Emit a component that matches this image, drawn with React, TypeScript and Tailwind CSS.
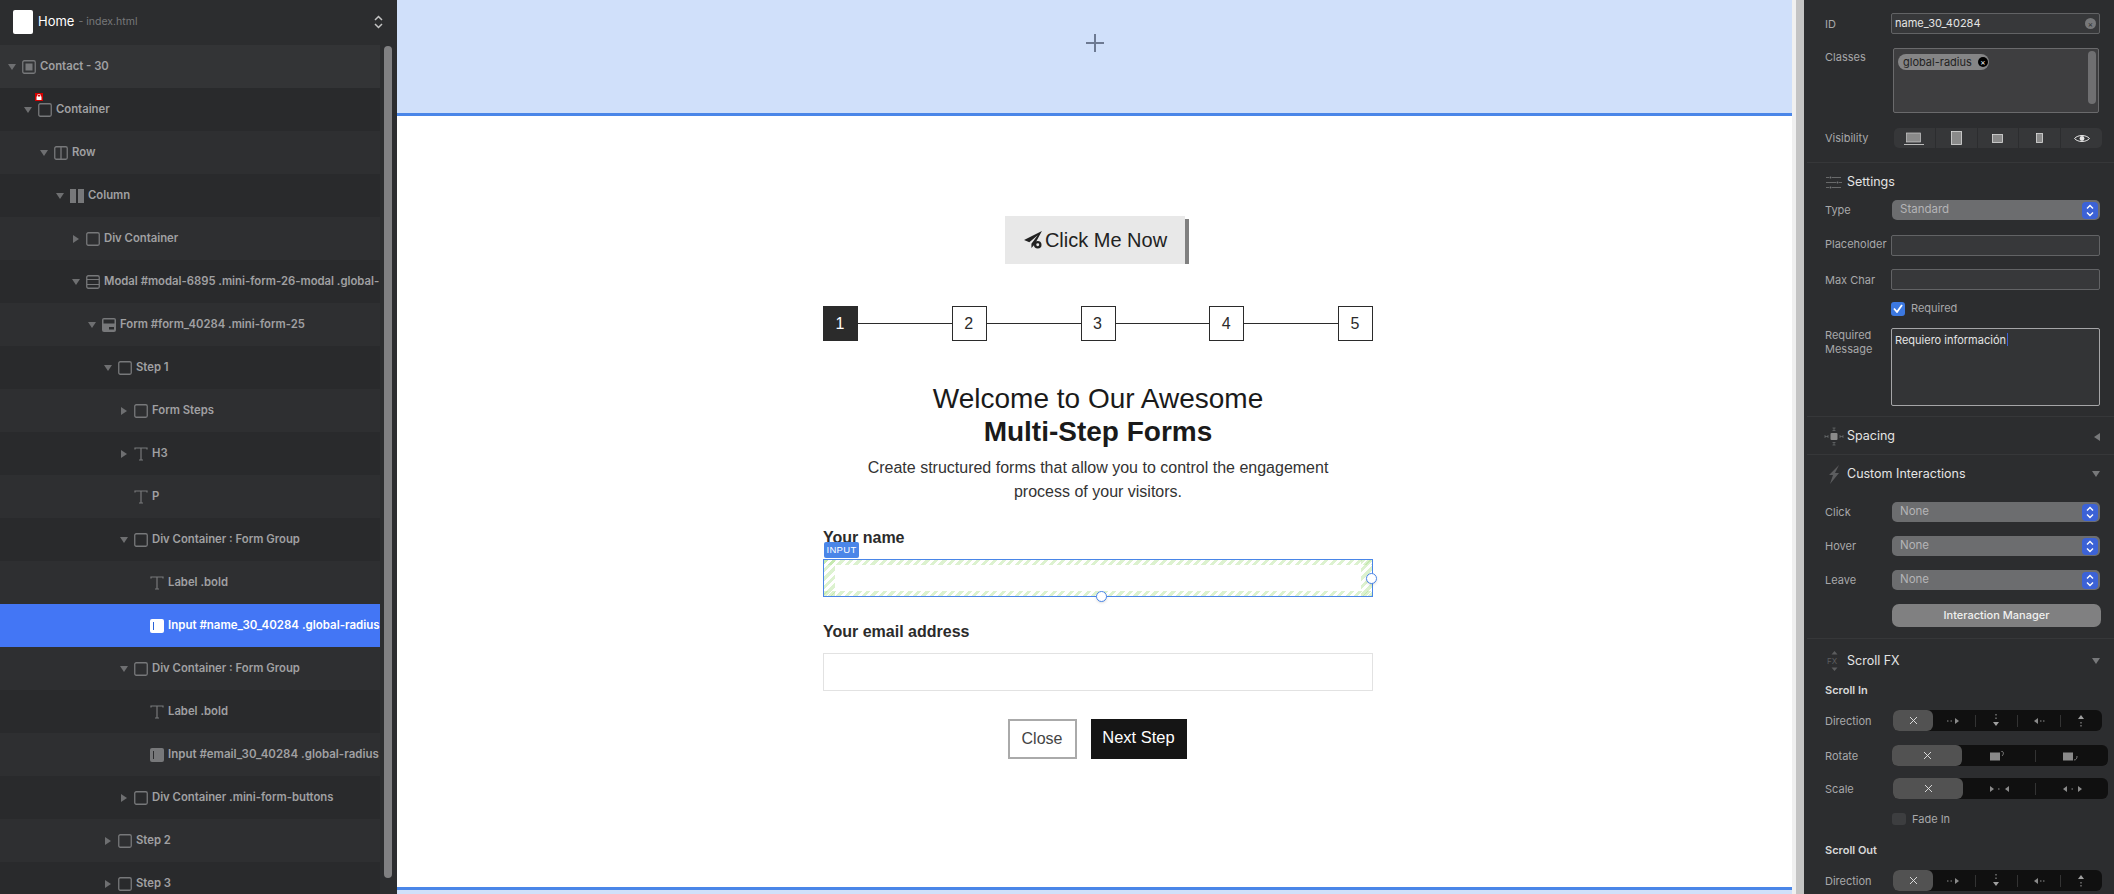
import { Fragment } from 'react';
import type { ReactNode } from 'react';

const hatch =
    'bg-[repeating-linear-gradient(135deg,rgba(150,215,110,0.33)_0px,rgba(150,215,110,0.33)_3px,transparent_3px,transparent_6px)]';

function Box() {
    return (
        <svg width="14" height="14" viewBox="0 0 14 14" fill="none">
            <rect x="0.75" y="0.75" width="12.5" height="12.5" rx="1.5" stroke="#77787a" strokeWidth="1.3" />
        </svg>
    );
}

function SectionIcon() {
    return (
        <svg width="14" height="14" viewBox="0 0 14 14" fill="none">
            <rect x="0.75" y="0.75" width="12.5" height="12.5" rx="1.5" stroke="#77787a" strokeWidth="1.3" />
            <rect x="3.5" y="3.5" width="7" height="7" fill="#77787a" />
        </svg>
    );
}

function RowIcon() {
    return (
        <svg width="14" height="14" viewBox="0 0 14 14" fill="none">
            <rect x="0.75" y="0.75" width="12.5" height="12.5" rx="1.5" stroke="#77787a" strokeWidth="1.3" />
            <path d="M7 1v12" stroke="#77787a" strokeWidth="1.3" />
        </svg>
    );
}

function ColumnIcon() {
    return (
        <svg width="14" height="14" viewBox="0 0 14 14">
            <rect x="0" y="0" width="6" height="14" fill="#77787a" />
            <rect x="8" y="0" width="6" height="14" fill="#77787a" />
        </svg>
    );
}

function ModalIcon() {
    return (
        <svg width="14" height="14" viewBox="0 0 14 14" fill="none">
            <rect x="0.75" y="0.75" width="12.5" height="12.5" rx="1.5" stroke="#77787a" strokeWidth="1.3" />
            <path d="M1 4.5h12M1 9.5h12" stroke="#77787a" strokeWidth="1.2" />
        </svg>
    );
}

function FormIcon() {
    return (
        <svg width="14" height="14" viewBox="0 0 14 14">
            <rect x="0" y="0" width="14" height="14" rx="2" fill="#77787a" />
            <rect x="1.5" y="1.5" width="11" height="4" fill="#2b2c2e" />
            <rect x="7" y="9" width="5" height="2.5" fill="#2b2c2e" />
        </svg>
    );
}

function TextIcon() {
    return (
        <svg width="14" height="14" viewBox="0 0 14 14" fill="none">
            <path d="M1 2.5V1h12v1.5M7 1v12M5 13h4" stroke="#77787a" strokeWidth="1.2" />
        </svg>
    );
}

function InputIcon({ active }: { active?: boolean }) {
    return (
        <svg width="14" height="14" viewBox="0 0 14 14">
            <rect x="0" y="0" width="14" height="14" rx="2" fill={active ? '#ffffff' : '#77787a'} />
            <path d="M3.5 3v8" stroke={active ? '#2a63d8' : '#2b2c2e'} strokeWidth="1" />
        </svg>
    );
}

type TreeRow = {
    depth: number;
    arrow?: 'down' | 'right';
    icon: ReactNode;
    label: string;
    lock?: boolean;
    active?: boolean;
    wide?: boolean;
};

const treeRows: TreeRow[] = [
    { depth: 0, arrow: 'down', icon: <SectionIcon />, label: 'Contact - 30' },
    { depth: 1, arrow: 'down', icon: <Box />, label: 'Container', lock: true },
    { depth: 2, arrow: 'down', icon: <RowIcon />, label: 'Row' },
    { depth: 3, arrow: 'down', icon: <ColumnIcon />, label: 'Column' },
    { depth: 4, arrow: 'right', icon: <Box />, label: 'Div Container' },
    { depth: 4, arrow: 'down', icon: <ModalIcon />, label: 'Modal #modal-6895 .mini-form-26-modal .global-' },
    { depth: 5, arrow: 'down', icon: <FormIcon />, label: 'Form #form_40284 .mini-form-25' },
    { depth: 6, arrow: 'down', icon: <Box />, label: 'Step 1' },
    { depth: 7, arrow: 'right', icon: <Box />, label: 'Form Steps' },
    { depth: 7, arrow: 'right', icon: <TextIcon />, label: 'H3' },
    { depth: 7, icon: <TextIcon />, label: 'P' },
    { depth: 7, arrow: 'down', icon: <Box />, label: 'Div Container : Form Group' },
    { depth: 8, icon: <TextIcon />, label: 'Label .bold' },
    { depth: 8, icon: <InputIcon active />, label: 'Input #name_30_40284 .global-radius', active: true, wide: true },
    { depth: 7, arrow: 'down', icon: <Box />, label: 'Div Container : Form Group' },
    { depth: 8, icon: <TextIcon />, label: 'Label .bold' },
    { depth: 8, icon: <InputIcon />, label: 'Input #email_30_40284 .global-radius', wide: true },
    { depth: 7, arrow: 'right', icon: <Box />, label: 'Div Container .mini-form-buttons' },
    { depth: 6, arrow: 'right', icon: <Box />, label: 'Step 2' },
    { depth: 6, arrow: 'right', icon: <Box />, label: 'Step 3' },
];

function Tree() {
    return (
        <aside className="relative flex h-full w-[397px] shrink-0 flex-col bg-[#2c2d2f] font-['Inter',sans-serif]">
            <div className="flex h-[44px] shrink-0 items-center pl-[13px] pr-[14px]">
                <div className="h-[24px] w-[20px] rounded-[2px] bg-white" />
                <span className="ml-[5px] text-[13px] text-white">Home</span>
                <span className="ml-[4px] text-[10.5px] text-[#77787a]">- index.html</span>
                <svg className="ml-auto" width="9" height="14" viewBox="0 0 9 14" fill="none">
                    <path d="M1 5l3.5-3.5L8 5M1 9l3.5 3.5L8 9" stroke="#c4c4c4" strokeWidth="1.5" />
                </svg>
            </div>
            <div className="mt-[1px] flex w-[380px] flex-col">
                {treeRows.map((row, i) => (
                    <div
                        key={i}
                        style={{ paddingLeft: 8 + row.depth * 16 }}
                        className={`relative flex h-[43px] shrink-0 items-center ${
                            row.active
                                ? 'bg-[#4376f5]'
                                : i === 0
                                  ? 'bg-[#333436]'
                                  : i % 2 === 0
                                    ? 'bg-[#2e2f31]'
                                    : 'bg-[#292a2c]'
                        }`}
                    >
                        <span className="flex w-[14px] shrink-0 justify-start">
                            {row.arrow === 'down' && (
                                <span className="h-0 w-0 border-x-[4px] border-t-[6px] border-x-transparent border-t-[#6e6f71]" />
                            )}
                            {row.arrow === 'right' && (
                                <span className="ml-px h-0 w-0 border-y-[4px] border-l-[6px] border-y-transparent border-l-[#6e6f71]" />
                            )}
                        </span>
                        <span className="flex shrink-0">{row.icon}</span>
                        <span
                            className={`ml-[4px] whitespace-nowrap font-semibold ${
                                row.wide ? 'text-[11.5px]' : 'text-[11.3px]'
                            } ${row.active ? 'text-white' : 'text-[#a0a0a2]'}`}
                        >
                            {row.label}
                        </span>
                        {row.lock && (
                            <span className="absolute left-[35px] top-[5px] flex h-[8px] w-[8px] items-center justify-center bg-[#d40000]">
                                <svg width="6" height="6" viewBox="0 0 6 6">
                                    <rect x="0.5" y="2.5" width="5" height="3.5" fill="#fff" />
                                    <path d="M1.5 3V1.6a1.5 1.5 0 0 1 3 0V3" fill="none" stroke="#fff" strokeWidth="0.8" />
                                </svg>
                            </span>
                        )}
                    </div>
                ))}
            </div>
            {/* scrollbar */}
            <div className="absolute left-[384px] top-[46px] h-[832px] w-[8px] rounded-full bg-[#808082]" />
        </aside>
    );
}

function PlaneIcon() {
    return (
        <svg width="22" height="20" viewBox="0 0 19 19">
            <path d="M18 1L1 9.5l5 2.2L14 5 8 13v4l3-3.2z" fill="#222" />
            <circle cx="14" cy="14" r="3.6" fill="#222" />
            <circle cx="14" cy="14" r="1.4" fill="#e8e8e8" />
        </svg>
    );
}

function Stepper() {
    const steps = [1, 2, 3, 4, 5];
    return (
        <div className="mt-[42px] flex w-full items-center">
            {steps.map((n) => (
                <div key={n} className={`flex items-center ${n > 1 ? 'flex-1' : ''}`}>
                    {n > 1 && <div className="h-px flex-1 bg-[#2b2b2b]" />}
                    <div
                        className={`flex h-[35px] w-[35px] shrink-0 items-center justify-center border border-[#2b2b2b] pr-[1px] text-[16px] ${
                            n === 1 ? 'bg-[#2b2b2b] text-white' : 'bg-white text-[#2b2b2b]'
                        }`}
                    >
                        {n}
                    </div>
                </div>
            ))}
        </div>
    );
}

function NameInput() {
    return (
        <div className="relative mt-[2px] h-[38px] w-full border border-[#4a86e8] bg-white">
            <div className={`absolute inset-x-0 top-0 h-[5px] ${hatch}`} />
            <div className={`absolute inset-x-0 bottom-0 h-[5px] ${hatch}`} />
            <div className={`absolute inset-y-0 left-0 w-[11px] ${hatch}`} />
            <div className={`absolute inset-y-0 right-0 w-[11px] ${hatch}`} />
            <div className="absolute left-0 top-[-18px] flex h-[16px] w-[35px] items-center justify-center rounded-[2px] bg-[#4a86e8] text-[9.5px] tracking-[0.3px] text-white">
                INPUT
            </div>
            <div className="absolute bottom-[-6px] left-[272px] h-[11px] w-[11px] rounded-full border-[1.5px] border-[#4a86e8] bg-white shadow-sm" />
            <div className="absolute right-[-5px] top-[13px] h-[11px] w-[11px] rounded-full border-[1.5px] border-[#4a86e8] bg-white shadow-sm" />
        </div>
    );
}

function Canvas() {
    return (
        <main className="flex h-full w-[1395px] shrink-0 flex-col bg-white font-['Liberation_Sans',Arial,sans-serif] text-[#1c1c1c]">
            <div className="flex h-[116px] shrink-0 items-center justify-center border-b-[3px] border-[#4a86e8] bg-[#d0e0fa] pb-[27px]">
                <svg width="22" height="22" viewBox="0 0 22 22" fill="none">
                    <path d="M11 2v18M2 11h18" stroke="#6d7a92" strokeWidth="2" />
                </svg>
            </div>
            <div className="h-[771px] shrink-0 pl-[426px] pt-[100px]">
                <div className="flex w-[550px] flex-col items-center">
                    <div className="mr-[3px] flex h-[48px] items-stretch">
                        <button className="flex w-[180px] items-center justify-center gap-[1px] bg-[#e8e8e8] text-[20px] text-[#222]">
                            <PlaneIcon />
                            Click Me Now
                        </button>
                        <div className="mt-[3px] w-[4px] bg-[#808080]" />
                    </div>
                    <Stepper />
                    <h3 className="mt-[41px] text-center text-[28px] leading-[33px] text-[#1a1a1a]">
                        Welcome to Our Awesome
                        <br />
                        <strong className="font-bold">Multi-Step Forms</strong>
                    </h3>
                    <p className="mt-[8px] text-center text-[16px] leading-[24px] text-[#333]">
                        Create structured forms that allow you to control the engagement
                        <br />
                        process of your visitors.
                    </p>
                    <div className="mt-[24px] w-full">
                        <label className="block text-[16px] font-bold leading-[20px] text-[#2b2b2b]">Your name</label>
                        <div className="h-[9px]" />
                        <NameInput />
                    </div>
                    <div className="mt-[25px] w-full">
                        <label className="block text-[16px] font-bold leading-[20px] text-[#2b2b2b]">
                            Your email address
                        </label>
                        <div className="mt-[11px] h-[38px] w-full border-[1.5px] border-[#e2e2e2] bg-white" />
                    </div>
                    <div className="mt-[28px] flex gap-[14px] pr-[2px]">
                        <button className="flex h-[40px] w-[69px] items-center justify-center border-[2px] border-[#aaaaaa] bg-white text-[16px] text-[#444]">
                            Close
                        </button>
                        <button className="flex h-[40px] w-[96px] items-center justify-center bg-[#151515] pb-[3px] text-[16.5px] text-white">
                            Next Step
                        </button>
                    </div>
                </div>
            </div>
            <div className="h-[3px] shrink-0 bg-[#4a86e8]" />
            <div className="flex-1 bg-[#d0e0fa]" />
        </main>
    );
}

function SelectArrows() {
    return (
        <span className="flex h-[17px] w-[16px] items-center justify-center rounded-[4px] bg-[#3c62d6]">
            <svg width="8" height="13" viewBox="0 0 8 13" fill="none">
                <path d="M1 4.5l3-3 3 3M1 8.5l3 3 3-3" stroke="#fff" strokeWidth="1.4" />
            </svg>
        </span>
    );
}

function Field({ label, className, children }: { label: ReactNode; className: string; children: ReactNode }) {
    return (
        <div className={`grid grid-cols-[66px_1fr] items-center pr-[14px] ${className}`}>
            <span className="whitespace-nowrap text-[11px] leading-[14px] text-[#a8a8aa]">{label}</span>
            <div className="min-w-0">{children}</div>
        </div>
    );
}

function TextBox({ children }: { children?: ReactNode }) {
    return (
        <div className="flex h-[21px] w-full items-center rounded-[2px] border border-[#626365] bg-[#37383a] pl-[3px] pr-[3px] text-[11px] text-[#e4e4e4]">
            {children}
        </div>
    );
}

function Select({ value }: { value: string }) {
    return (
        <div className="ml-[1px] flex h-[20px] w-[208px] items-center justify-between rounded-[5px] bg-[#6c6d6f] pl-[8px] pr-[2px] text-[11.5px] text-[#b4b4b6]">
            {value}
            <SelectArrows />
        </div>
    );
}

function SectionHead({ icon, title, arrow, className }: { icon: ReactNode; title: string; arrow?: 'down' | 'left'; className: string }) {
    return (
        <div className={`flex items-center pl-[16px] pr-[14px] ${className}`}>
            <span className="flex w-[22px] justify-center">{icon}</span>
            <span className="ml-[2px] text-[12.5px] text-[#e4e4e4]">{title}</span>
            {arrow === 'down' && (
                <span className="ml-auto h-0 w-0 border-x-[4px] border-t-[6px] border-x-transparent border-t-[#77787a]" />
            )}
            {arrow === 'left' && (
                <span className="ml-auto h-0 w-0 border-y-[4px] border-r-[6px] border-y-transparent border-r-[#77787a]" />
            )}
        </div>
    );
}

function Glyph({ kind }: { kind: string }) {
    const c = '#8a8a8a';
    if (kind === 'x') {
        return (
            <svg width="9" height="9" viewBox="0 0 9 9" fill="none">
                <path d="M1 1l7 7M8 1L1 8" stroke="#e6e6e6" strokeWidth="0.9" />
            </svg>
        );
    }
    if (kind === 'right' || kind === 'left') {
        const d = kind === 'right' ? 'M8 1l4 3-4 3z' : 'M6 1L2 4l4 3z';
        const dots = kind === 'right' ? 'M0 4h1.5M3.5 4H5' : 'M8 4h1.5M11 4h1.5';
        return (
            <svg width="14" height="8" viewBox="0 0 14 8" fill="none">
                <path d={d} fill={c} />
                <path d={dots} stroke={c} strokeWidth="1" />
            </svg>
        );
    }
    if (kind === 'down' || kind === 'up') {
        const d = kind === 'down' ? 'M1 8l3 4 3-4z' : 'M1 5l3-4 3 4z';
        const dots = kind === 'down' ? 'M4 0v1.5M4 3.5V5' : 'M4 8v1.5M4 11v1.5';
        return (
            <svg width="8" height="13" viewBox="0 0 8 13" fill="none">
                <path d={d} fill="#a0a0a0" />
                <path d={dots} stroke="#a0a0a0" strokeWidth="1" />
            </svg>
        );
    }
    if (kind === 'rotR' || kind === 'rotL') {
        return (
            <svg width="17" height="10" viewBox="0 0 17 10" fill="none">
                <rect x="0" y="1.5" width="10" height="8" fill={c} />
                <path d={kind === 'rotR' ? 'M11 0c3 .5 3 3 1 5' : 'M11 9c2.5 0 3-2 3-4'} stroke={c} strokeWidth="0.9" />
            </svg>
        );
    }
    if (kind === 'in') {
        return (
            <svg width="19" height="8" viewBox="0 0 19 8">
                <path d="M0 1l4 3-4 3zM19 1l-4 3 4 3z" fill={c} />
                <rect x="8" y="3.5" width="1.5" height="1" fill={c} />
            </svg>
        );
    }
    return (
        <svg width="19" height="8" viewBox="0 0 19 8">
            <path d="M4 1L0 4l4 3zM15 1l4 3-4 3z" fill={c} />
            <rect x="8.5" y="3.5" width="1.5" height="1" fill={c} />
        </svg>
    );
}

function Segments({ items, activeW, widthClass }: { items: string[]; activeW: string; widthClass: string }) {
    return (
        <div className={`flex h-[21px] items-center rounded-[6px] bg-[#101010] ${widthClass}`}>
            {items.map((g, i) => (
                <Fragment key={i}>
                    {i > 1 && <span className="h-[12px] w-px shrink-0 bg-[#333333]" />}
                    <div
                        className={`flex h-full items-center justify-center ${
                            i === 0 ? `${activeW} rounded-[6px] bg-[#525252]` : 'flex-1'
                        }`}
                    >
                        <Glyph kind={g} />
                    </div>
                </Fragment>
            ))}
        </div>
    );
}

function Visibility() {
    const cell = 'flex h-full flex-1 items-center justify-center border-r border-r-[#2c2d2f]';
    return (
        <div className="ml-[3px] flex h-[20px] w-[208px] items-center rounded-[5px] bg-[#363739]">
            <div className={cell}>
                <svg width="20" height="13" viewBox="0 0 20 13">
                    <rect x="2.5" y="1" width="14" height="9" fill="#8a8a8a" stroke="#ccc" strokeWidth="0.7" />
                    <path d="M0 12.5h20" stroke="#ddd" strokeWidth="0.8" />
                </svg>
            </div>
            <div className={cell}>
                <svg width="11" height="14" viewBox="0 0 11 14">
                    <rect x="0.5" y="0.5" width="10" height="13" fill="#8a8a8a" stroke="#ddd" strokeWidth="0.8" />
                </svg>
            </div>
            <div className={cell}>
                <svg width="11" height="9" viewBox="0 0 11 9">
                    <rect x="0.5" y="0.5" width="10" height="8" fill="#8a8a8a" stroke="#ddd" strokeWidth="0.8" />
                </svg>
            </div>
            <div className={cell}>
                <svg width="7" height="10" viewBox="0 0 7 10">
                    <rect x="0.5" y="0.5" width="6" height="9" fill="#8a8a8a" stroke="#ddd" strokeWidth="0.8" />
                </svg>
            </div>
            <div className="flex h-full flex-1 items-center justify-center">
                <svg width="16" height="9" viewBox="0 0 16 9">
                    <path d="M0.5 4.5C4 .5 12 .5 15.5 4.5 12 8.5 4 8.5 .5 4.5z" fill="none" stroke="#e6e6e6" strokeWidth="1" />
                    <circle cx="8" cy="4.5" r="2.4" fill="#e6e6e6" />
                </svg>
            </div>
        </div>
    );
}

const directionItems = ['x', 'right', 'down', 'left', 'up'];

function Inspector() {
    return (
        <aside className="flex h-full flex-1 flex-col overflow-hidden bg-[#2c2d2f] font-['Inter',sans-serif]">
            <div className="pl-[18px]">
                <Field label="ID" className="mt-[13px]">
                    <TextBox>
                        name_30_40284
                        <span className="ml-auto flex h-[11px] w-[11px] items-center justify-center rounded-full bg-[#77787a] text-[8px] leading-none text-[#2c2d2f]">
                            ×
                        </span>
                    </TextBox>
                </Field>
                <Field label={<span className="relative -top-[24px]">Classes</span>} className="mt-[14px]">
                    <div className="relative ml-[2px] h-[65px] w-[206px] rounded-[2px] border border-[#6a6a6c] bg-[#3e3e40]">
                        <div className="ml-[4px] mt-[5px] flex h-[16px] w-[91px] items-center justify-between rounded-full bg-[#858586] pl-[5px] pr-[1px] text-[11px] text-[#222]">
                            global-radius
                            <span className="flex h-[10px] w-[10px] items-center justify-center rounded-full bg-black text-[8px] leading-none text-white">
                                ×
                            </span>
                        </div>
                        {/* class list scrollbar */}
                        <div className="absolute right-[2px] top-[2px] h-[53px] w-[8px] rounded-full bg-[#6f6f71]" />
                    </div>
                </Field>
                <Field label="Visibility" className="mt-[15px]">
                    <Visibility />
                </Field>
            </div>
            <div className="mt-[14px] h-px shrink-0 bg-[#363739]" />
            <SectionHead
                className="mt-[10px] h-[19px]"
                title="Settings"
                icon={
                    <svg width="16" height="13" viewBox="0 0 16 13" fill="none">
                        <path d="M0 1.5h3M6 1.5h9M0 6.5h10M13 6.5h3M0 11.5h3M6 11.5h9" stroke="#77787a" strokeWidth="0.8" />
                        <circle cx="4.5" cy="1.5" r="1" fill="#77787a" />
                        <circle cx="11.5" cy="6.5" r="1" fill="#77787a" />
                        <circle cx="4.5" cy="11.5" r="1" fill="#77787a" />
                    </svg>
                }
            />
            <div className="pl-[18px]">
                <Field label="Type" className="mt-[8px]">
                    <Select value="Standard" />
                </Field>
                <Field label={<span className="relative -top-[2px]">Placeholder</span>} className="mt-[15px]">
                    <TextBox />
                </Field>
                <Field label="Max Char" className="mt-[13px]">
                    <TextBox />
                </Field>
                <div className="mt-[11px] flex h-[15px] items-center pl-[66px]">
                    <span className="flex h-[14px] w-[14px] items-center justify-center rounded-[3px] bg-[#3c78e0]">
                        <svg width="10" height="9" viewBox="0 0 10 9" fill="none">
                            <path d="M1 4.5L4 8l5-7" stroke="#fff" strokeWidth="1.8" />
                        </svg>
                    </span>
                    <span className="ml-[6px] text-[11px] text-[#a8a8aa]">Required</span>
                </div>
                <div className="mt-[12px] grid grid-cols-[66px_1fr] pr-[14px]">
                    <span className="text-[11px] leading-[14px] text-[#a8a8aa]">
                        Required
                        <br />
                        Message
                    </span>
                    <div className="h-[78px] rounded-[2px] border border-[#a5a5a7] bg-[#333436] px-[3px] pt-[2px] text-[11px] leading-[14px] text-[#e4e4e4]">
                        Requiero información
                        <span className="ml-px inline-block h-[13px] w-[1.5px] translate-y-[2px] bg-[#3c62d6]" />
                    </div>
                </div>
            </div>
            <div className="mt-[10px] h-px shrink-0 bg-[#363739]" />
            <SectionHead
                className="h-[37px] pt-[2px]"
                title="Spacing"
                arrow="left"
                icon={
                    <svg width="20" height="19" viewBox="0 0 20 19" fill="none">
                        <rect x="6.5" y="6" width="7" height="7" rx="1" fill="#8a8a8a" />
                        <path d="M10 1v2.5M8.5 1h3M8.5 3.5h3M10 15.5V18M8.5 15.5h3M8.5 18h3M1 9.5h3M1 8v3M4 8v3M16 9.5h3M16 8v3M19 8v3" stroke="#77787a" strokeWidth="0.6" />
                    </svg>
                }
            />
            <div className="h-px shrink-0 bg-[#363739]" />
            <SectionHead
                className="h-[38px]"
                title="Custom Interactions"
                arrow="down"
                icon={
                    <svg width="12" height="19" viewBox="0 0 12 19">
                        <path d="M11 0L1 10h4l-3 9 9-11H7z" fill="#5c5d5f" />
                    </svg>
                }
            />
            <div className="pl-[18px]">
                <Field label="Click" className="mt-[9px]">
                    <Select value="None" />
                </Field>
                <Field label="Hover" className="mt-[14px]">
                    <Select value="None" />
                </Field>
                <Field label="Leave" className="mt-[14px]">
                    <Select value="None" />
                </Field>
                <div className="ml-[67px] mr-[13px] mt-[14px] flex h-[23px] items-center justify-center rounded-[7px] bg-[#808081] text-[11px] font-medium text-[#f0f0f0]">
                    Interaction Manager
                </div>
            </div>
            <div className="mt-[11px] h-px shrink-0 bg-[#363739]" />
            <SectionHead
                className="mt-[10px] h-[24px]"
                title="Scroll FX"
                arrow="down"
                icon={
                    <svg width="15" height="20" viewBox="0 0 15 20">
                        <path d="M7.5 0l3 3.5h-6zM7.5 20l3-3.5h-6z" fill="#5c5d5f" />
                        <text x="0" y="13" fontSize="8" fill="#5c5d5f" fontFamily="Inter, sans-serif">
                            FX
                        </text>
                    </svg>
                }
            />
            <div className="pl-[18px]">
                <div className="mt-[10px] h-[14px] text-[11px] font-semibold leading-[14px] text-[#d8d8d8]">Scroll In</div>
                <Field label="Direction" className="mt-[13px]">
                    <div className="pl-[2px]">
                        <Segments items={directionItems} activeW="w-[40px]" widthClass="w-[209px]" />
                    </div>
                </Field>
                <Field label="Rotate" className="mt-[14px] !pr-0">
                    <div className="pl-[1px]">
                        <Segments items={['x', 'rotR', 'rotL']} activeW="w-[70px]" widthClass="w-[216px]" />
                    </div>
                </Field>
                <Field label="Scale" className="mt-[12px] !pr-0">
                    <div className="pl-[2px]">
                        <Segments items={['x', 'in', 'out']} activeW="w-[70px]" widthClass="w-[215px]" />
                    </div>
                </Field>
                <div className="mt-[13px] flex h-[14px] items-center pl-[67px]">
                    <span className="h-[12px] w-[14px] rounded-[3px] bg-[#3d3e40]" />
                    <span className="ml-[6px] text-[11px] text-[#a8a8aa]">Fade In</span>
                </div>
                <div className="mt-[17px] h-[14px] text-[11px] font-semibold leading-[14px] text-[#d8d8d8]">Scroll Out</div>
                <Field label="Direction" className="mt-[13px]">
                    <div className="pl-[2px]">
                        <Segments items={directionItems} activeW="w-[40px]" widthClass="w-[209px]" />
                    </div>
                </Field>
            </div>
        </aside>
    );
}

export default function App() {
    return (
        <div className="flex h-[894px] w-[2114px] overflow-hidden bg-[#1b1b1b]">
            <Tree />
            <Canvas />
            {/* canvas gutter */}
            <div className="w-[4px] shrink-0 bg-[#f0f0f0]" />
            <div className="w-[8px] shrink-0 bg-[#c4c4c4]" />
            <div className="w-[3px] shrink-0 bg-[#2c2d2f]" />
            <Inspector />
        </div>
    );
}
